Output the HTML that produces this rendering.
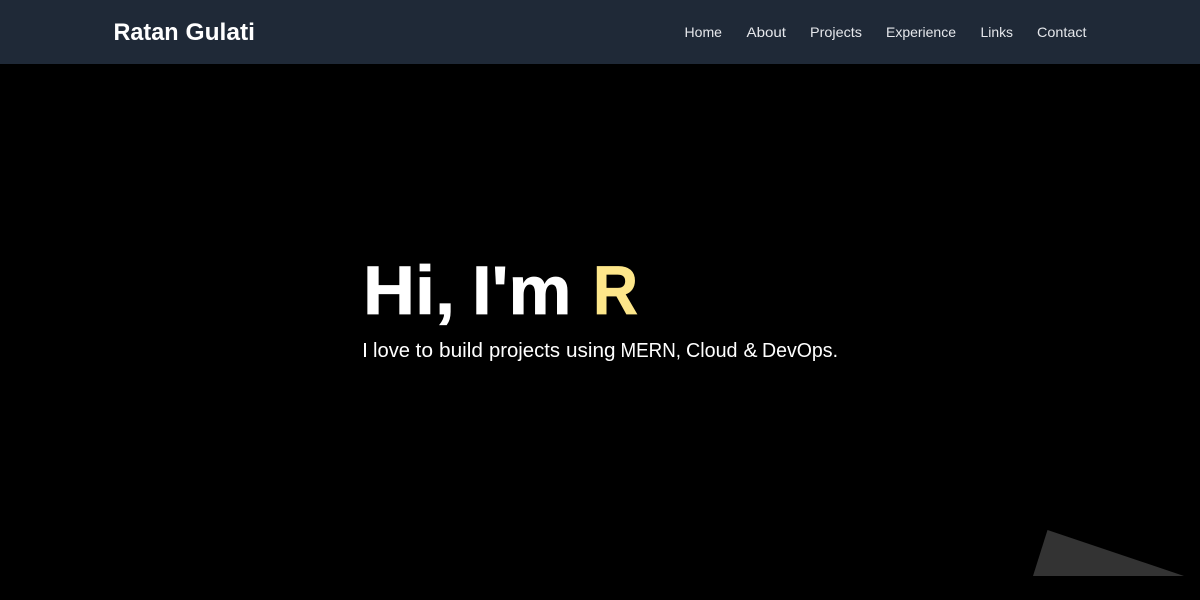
<!DOCTYPE html>
<html lang="en">
<head>
<meta charset="utf-8">
<title>Ratan Gulati</title>
<style>
html,body{margin:0;padding:0;background:#000;width:1200px;height:600px;overflow:hidden}
svg{display:block}
text{font-family:"Liberation Sans",sans-serif}
</style>
</head>
<body>
<svg width="1200" height="600" viewBox="0 0 1200 600" xmlns="http://www.w3.org/2000/svg">
<rect width="1200" height="600" fill="#000"/>
<rect width="1200" height="64" fill="#1f2937"/>
<text x="113.5" y="40" font-size="24" font-weight="700" fill="#fff" textLength="65" lengthAdjust="spacingAndGlyphs">Ratan</text>
<text x="185.5" y="40" font-size="24" font-weight="700" fill="#fff" textLength="69.5" lengthAdjust="spacingAndGlyphs">Gulati</text>
<g font-size="14" fill="#e5e7eb">
<text x="684.5" y="37" textLength="37.5" lengthAdjust="spacingAndGlyphs">Home</text>
<text x="746.5" y="37" textLength="39.5" lengthAdjust="spacingAndGlyphs">About</text>
<text x="810" y="37" textLength="52" lengthAdjust="spacingAndGlyphs">Projects</text>
<text x="886" y="37" textLength="70" lengthAdjust="spacingAndGlyphs">Experience</text>
<text x="980.5" y="37" textLength="32.5" lengthAdjust="spacingAndGlyphs">Links</text>
<text x="1037" y="37" textLength="49.5" lengthAdjust="spacingAndGlyphs">Contact</text>
</g>
<g font-size="69" font-weight="700" stroke-width="0.8">
<text x="363" y="314" fill="#fff" stroke="#fff" textLength="92" lengthAdjust="spacingAndGlyphs">Hi,</text>
<text x="472" y="314" fill="#fff" stroke="#fff" textLength="99.5" lengthAdjust="spacingAndGlyphs">I'm</text>
<text x="593" y="314" fill="#fde68a" stroke="#fde68a" textLength="45" lengthAdjust="spacingAndGlyphs">R</text>
</g>
<g font-size="20" fill="#fff">
<text x="362" y="357" textLength="6" lengthAdjust="spacingAndGlyphs">I</text>
<text x="373" y="357" textLength="37" lengthAdjust="spacingAndGlyphs">love</text>
<text x="415.5" y="357" textLength="17.5" lengthAdjust="spacingAndGlyphs">to</text>
<text x="439" y="357" textLength="44" lengthAdjust="spacingAndGlyphs">build</text>
<text x="489" y="357" textLength="71" lengthAdjust="spacingAndGlyphs">projects</text>
<text x="566" y="357" textLength="49.5" lengthAdjust="spacingAndGlyphs">using</text>
<text x="620.5" y="357" textLength="60.5" lengthAdjust="spacingAndGlyphs">MERN,</text>
<text x="686" y="357" textLength="51.5" lengthAdjust="spacingAndGlyphs">Cloud</text>
<text x="743.5" y="357" textLength="14" lengthAdjust="spacingAndGlyphs">&amp;</text>
<text x="762" y="357" textLength="76" lengthAdjust="spacingAndGlyphs">DevOps.</text>
</g>
<polygon points="1047.5,530 1033,576 1184,576" fill="#333"/>
</svg>
</body>
</html>
